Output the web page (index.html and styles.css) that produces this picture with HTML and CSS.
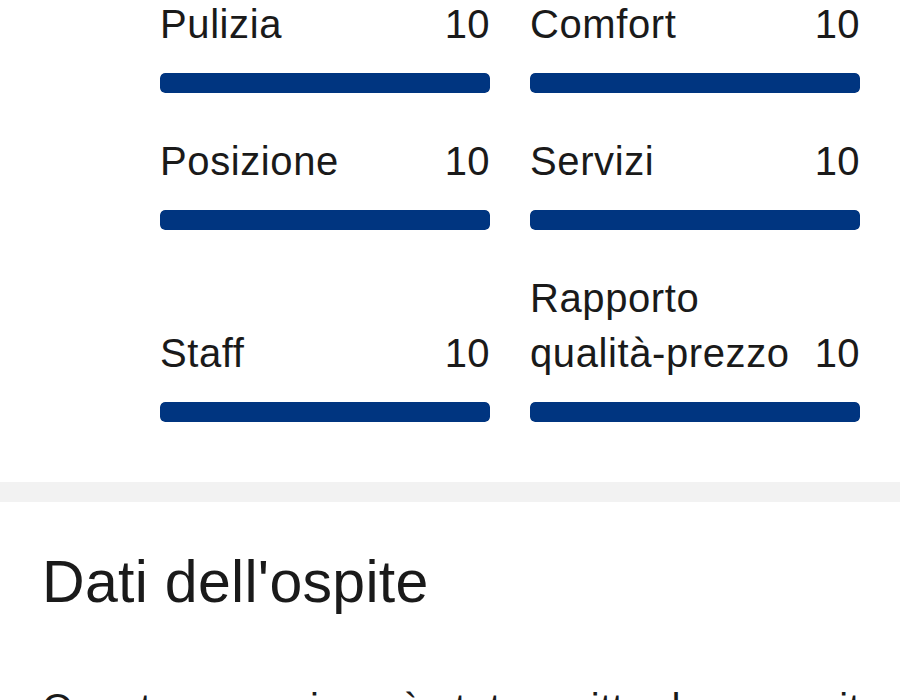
FILE: index.html
```html
<!DOCTYPE html>
<html lang="it">
<head>
  <meta charset="UTF-8">
  <meta name="viewport" content="width=device-width, initial-scale=1">
  <title>Punteggi della recensione</title>
  <link rel="stylesheet" href="styles.css">
</head>
<body>

  <section class="scores">
    <div class="score">
      <div class="score-head">
        <span class="score-label">Pulizia</span>
        <span class="score-value">10</span>
      </div>
      <div class="bar"><div class="bar-fill" style="width:100%"></div></div>
    </div>
    <div class="score">
      <div class="score-head">
        <span class="score-label">Comfort</span>
        <span class="score-value">10</span>
      </div>
      <div class="bar"><div class="bar-fill" style="width:100%"></div></div>
    </div>
    <div class="score">
      <div class="score-head">
        <span class="score-label">Posizione</span>
        <span class="score-value">10</span>
      </div>
      <div class="bar"><div class="bar-fill" style="width:100%"></div></div>
    </div>
    <div class="score">
      <div class="score-head">
        <span class="score-label">Servizi</span>
        <span class="score-value">10</span>
      </div>
      <div class="bar"><div class="bar-fill" style="width:100%"></div></div>
    </div>
    <div class="score">
      <div class="score-head">
        <span class="score-label">Staff</span>
        <span class="score-value">10</span>
      </div>
      <div class="bar"><div class="bar-fill" style="width:100%"></div></div>
    </div>
    <div class="score">
      <div class="score-head">
        <span class="score-label">Rapporto qualità-prezzo</span>
        <span class="score-value">10</span>
      </div>
      <div class="bar"><div class="bar-fill" style="width:100%"></div></div>
    </div>
  </section>

  <div class="divider"></div>

  <section class="guest">
    <h2>Dati dell'ospite</h2>
    <p>Questa recensione è stata scritta da un ospite</p>
  </section>

</body>
</html>
```

FILE: styles.css
```css
body {
  margin: 0;
  font-family: "Liberation Sans", Arial, sans-serif;
  background: #fff;
  color: #1a1a1a;
  overflow: hidden;
}

.scores {
  display: grid;
  grid-template-columns: 1fr 1fr;
  column-gap: 40px;
  row-gap: 41px;
  margin-top: -3px;
  padding: 0 40px 60px 160px;
  align-items: end;
}

.score-head {
  display: flex;
  justify-content: space-between;
  align-items: flex-end;
  gap: 12px;
  font-size: 40px;
  line-height: 55px;
}

.score-label {
  max-width: 280px;
  letter-spacing: 0.6px;
}

.score-value {
  letter-spacing: 0.4px;
}

.bar {
  margin-top: 21px;
  height: 20px;
  border-radius: 5px;
  background: #e6e6e6;
  overflow: hidden;
}

.bar-fill {
  height: 100%;
  background: #003580;
  border-radius: 5px;
}

.divider {
  height: 20px;
  background: #f2f2f2;
}

.guest {
  padding: 45px 42px 0;
}

.guest h2 {
  margin: 0;
  font-size: 59px;
  font-weight: normal;
  line-height: 1.2;
  letter-spacing: 0.3px;
}

.guest p {
  margin: 63px 0 0;
  font-size: 40px;
  line-height: 55px;
  letter-spacing: 0.6px;
  white-space: nowrap;
}
```
